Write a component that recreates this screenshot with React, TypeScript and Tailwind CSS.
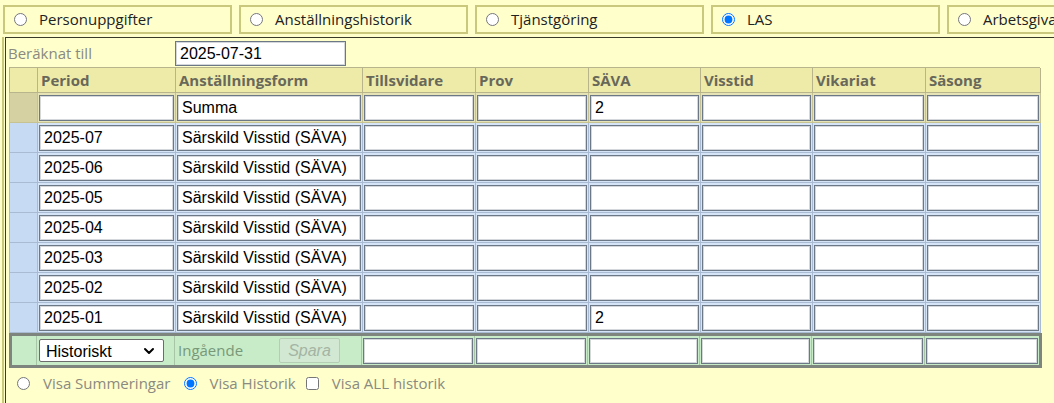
import { ChevronDown } from "lucide-react";

const cols = "grid-cols-[28px_138px_187px_113px_113px_112px_112px_113px_115px]";
const heads = ["Period", "Anställningsform", "Tillsvidare", "Prov", "SÄVA", "Visstid", "Vikariat", "Säsong"];
const tabs = ["Personuppgifter", "Anställningshistorik", "Tjänstgöring", "LAS", "Arbetsgivare"];
const months = ["2025-07", "2025-06", "2025-05", "2025-04", "2025-03", "2025-02", "2025-01"];

const inputCls =
    "h-[26px] w-full bg-white border border-[#6c7885] shadow-[inset_0_0_0_1px_#d4d8dc] px-[4px] text-[16px] text-black font-['Liberation_Sans',Arial,sans-serif] outline-none";

function Cell({ value = "", tone }: { value?: string; tone: "sum" | "data" | "green" }) {
    const bg =
        tone === "sum"
            ? "bg-[#e6e4b6] border-[#c6c292]"
            : tone === "data"
              ? "bg-[#d6e4f8] border-[#a9bad3]"
              : "bg-[#c8ecc8] border-[#a6c6a6]";
    return (
        <div className={`border-r border-b px-px pt-[2px] pb-px ${bg}`}>
            <input className={inputCls} value={value} readOnly />
        </div>
    );
}

export default function App() {
    return (
        <div className="w-[1054px] h-[403px] overflow-hidden bg-[#ffffcc] font-['Open_Sans',sans-serif]">
            {/* flikar */}
            <div className="flex gap-[7px] pl-[3px] pt-[5px]">
                {tabs.map((t) => (
                    <label
                        key={t}
                        className="flex h-[29px] w-[229px] shrink-0 items-center gap-[12px] overflow-hidden border-2 border-[#c9c87c] pl-[9px] text-[15px] text-[#222]"
                    >
                        <input type="radio" name="tab" className="m-0 h-[13px] w-[13px]" checked={t === "LAS"} readOnly />
                        <span className="whitespace-nowrap">{t}</span>
                    </label>
                ))}
            </div>

            <div className="ml-[2px] mt-[3px] h-[400px] border-l-2 border-[#c9c87c]">
                <div className="ml-px h-full border-l border-t border-[#3a3a2a] pl-[2px] pt-[3px]">
                    <div className="flex items-center">
                        <span className="w-[167px] text-[15px] text-[#8a8a80]">Beräknat till</span>
                        <input className={`${inputCls} !h-[25px] !w-[171px]`} value="2025-07-31" readOnly />
                    </div>

                    <div className="ml-px mt-px w-[1031px]">
                        {/* rubrikrad */}
                        <div className={`grid ${cols} border-l border-t border-[#b8b58d]`}>
                            <div className="h-[25px] border-r border-b border-[#b8b58d] bg-[#eeeba9]" />
                            {heads.map((h) => (
                                <div
                                    key={h}
                                    className="flex h-[25px] items-center border-r border-b border-[#b8b58d] bg-[#eeeba9] px-[3px] text-[15px] font-bold text-[#68685a]"
                                >
                                    {h}
                                </div>
                            ))}
                        </div>

                        {/* summa */}
                        <div className={`grid ${cols} border-l border-[#c6c292]`}>
                            <div className="border-r border-b border-[#c6c292] bg-[#d5d1a3]" />
                            <Cell tone="sum" />
                            <Cell tone="sum" value="Summa" />
                            <Cell tone="sum" />
                            <Cell tone="sum" />
                            <Cell tone="sum" value="2" />
                            <Cell tone="sum" />
                            <Cell tone="sum" />
                            <Cell tone="sum" />
                        </div>

                        {months.map((m) => (
                            <div key={m} className={`grid ${cols} border-l border-[#a9bad3]`}>
                                <div className="border-r border-b border-[#a9bad3] bg-[#c6daf4]" />
                                <Cell tone="data" value={m} />
                                <Cell tone="data" value="Särskild Visstid (SÄVA)" />
                                <Cell tone="data" />
                                <Cell tone="data" />
                                <Cell tone="data" value={m === "2025-01" ? "2" : ""} />
                                <Cell tone="data" />
                                <Cell tone="data" />
                                <Cell tone="data" />
                            </div>
                        ))}

                        {/* ny rad */}
                        <div className="grid w-[1033px] grid-cols-[25px_138px_187px_113px_113px_112px_112px_113px_114px] border-[3px] border-[#7e847e] [&>div]:border-b-0">
                            <div className="border-r border-[#a6c6a6] bg-[#c8ecc8]" />
                            <div className="flex items-center border-r border-[#a6c6a6] bg-[#c8ecc8] pl-[2px]">
                                <div className="relative h-[23px] w-[125px]">
                                    <select className="h-full w-full appearance-none rounded-[2px] border border-[#6c6c6c] bg-white pl-[6px] font-['Liberation_Sans',Arial,sans-serif] text-[16px] text-black">
                                        <option>Historiskt</option>
                                    </select>
                                    <ChevronDown
                                        size={16}
                                        strokeWidth={3}
                                        className="pointer-events-none absolute right-[7px] top-[4px] text-black"
                                    />
                                </div>
                            </div>
                            <div className="flex items-center border-r border-[#a6c6a6] bg-[#c8ecc8] pl-[3px]">
                                <span className="w-[101px] text-[15px] text-[#789878]">Ingående</span>
                                <button
                                    disabled
                                    className="h-[25px] w-[61px] rounded-[2px] border border-[#b5cdb5] bg-[#d2e8d2] font-['Liberation_Sans',Arial,sans-serif] text-[16px] italic text-[#a4b4a4]"
                                >
                                    Spara
                                </button>
                            </div>
                            <Cell tone="green" />
                            <Cell tone="green" />
                            <Cell tone="green" />
                            <Cell tone="green" />
                            <Cell tone="green" />
                            <div className="bg-[#c8ecc8] px-px pt-[2px] pb-px">
                                <input className={inputCls} readOnly />
                            </div>
                        </div>
                    </div>

                    {/* visningsval */}
                    <div className="flex h-[30px] items-center pl-[9px] text-[15px] text-[#8a8a80]">
                        <input type="radio" name="visa" className="m-0 h-[13px] w-[13px]" readOnly />
                        <span className="ml-[13px]">Visa Summeringar</span>
                        <input type="radio" name="visa" className="ml-[14px] h-[13px] w-[13px]" checked readOnly />
                        <span className="ml-[12px]">Visa Historik</span>
                        <input type="checkbox" className="ml-[10px] h-[13px] w-[13px]" readOnly />
                        <span className="ml-[13px]">Visa ALL historik</span>
                    </div>
                </div>
            </div>
        </div>
    );
}
